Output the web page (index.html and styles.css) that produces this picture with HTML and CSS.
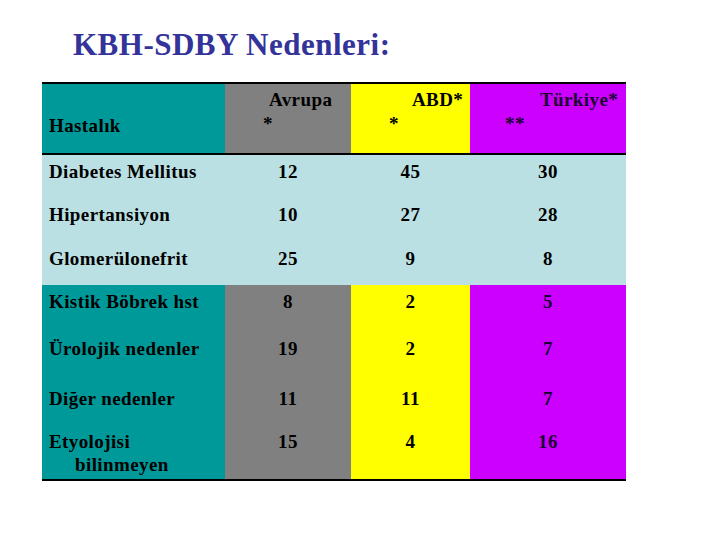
FILE: index.html
```html
<!DOCTYPE html>
<html lang="tr">
<head>
<meta charset="utf-8">
<title>KBH-SDBY Nedenleri</title>
<link rel="stylesheet" href="styles.css">
</head>
<body>
<h1 class="title">KBH-SDBY Nedenleri:</h1>
<table class="data">
  <colgroup>
    <col class="c1"><col class="c2"><col class="c3"><col class="c4">
  </colgroup>
  <thead>
    <tr class="head">
      <th class="teal h-name">Hastalık</th>
      <th class="gray h-col"><span class="l1 avr">Avrupa</span><span class="l2 avr2">*</span></th>
      <th class="yellow h-col"><span class="l1 abd">ABD*</span><span class="l2 abd2">*</span></th>
      <th class="magenta h-col"><span class="l1 tr">Türkiye*</span><span class="l2 tr2">**</span></th>
    </tr>
  </thead>
  <tbody>
    <tr class="light r44">
      <td class="name">Diabetes Mellitus</td><td class="num">12</td><td class="num">45</td><td class="num">30</td>
    </tr>
    <tr class="light r44">
      <td class="name">Hipertansiyon</td><td class="num">10</td><td class="num">27</td><td class="num">28</td>
    </tr>
    <tr class="light r43">
      <td class="name">Glomerülonefrit</td><td class="num">25</td><td class="num">9</td><td class="num">8</td>
    </tr>
    <tr class="color r47">
      <td class="name teal">Kistik Böbrek hst</td><td class="num gray">8</td><td class="num yellow">2</td><td class="num magenta">5</td>
    </tr>
    <tr class="color r50">
      <td class="name teal">Ürolojik nedenler</td><td class="num gray">19</td><td class="num yellow">2</td><td class="num magenta">7</td>
    </tr>
    <tr class="color r43">
      <td class="name teal">Diğer nedenler</td><td class="num gray">11</td><td class="num yellow">11</td><td class="num magenta">7</td>
    </tr>
    <tr class="color r55">
      <td class="name teal">Etyolojisi<span class="indent">bilinmeyen</span></td><td class="num gray">15</td><td class="num yellow">4</td><td class="num magenta">16</td>
    </tr>
  </tbody>
</table>
</body>
</html>
```
FILE: styles.css
```css
html, body {
  margin: 0;
  padding: 0;
  background: #ffffff;
}
body {
  font-family: "Liberation Serif", "Times New Roman", serif;
  color: #000000;
}
.title {
  margin: 0;
  padding: 30px 0 0 73px;
  height: 30px;
  font-size: 31px;
  line-height: 30px;
  letter-spacing: 0.5px;
  font-weight: bold;
  color: #333399;
}
.data {
  margin: 22px 0 0 42px;
  border-collapse: collapse;
  table-layout: fixed;
  width: 584px;
  border-top: 2px solid #000;
  border-bottom: 2px solid #000;
  font-size: 19px;
  letter-spacing: 0.4px;
  font-weight: bold;
}
.c1 { width: 183px; }
.c2 { width: 126px; }
.c3 { width: 119px; }
.c4 { width: 156px; }
.data th, .data td {
  padding: 0;
  vertical-align: top;
  text-align: left;
  font-weight: bold;
}
.head {
  height: 71px;
  border-bottom: 2px solid #000;
}
.head th {
  line-height: 24px;
}
.h-name {
  padding: 30px 0 0 7px !important;
}
.h-col {
  padding-top: 4px !important;
}
.l1, .l2 {
  display: block;
}
.avr { padding-left: 44px; }
.avr2 { padding-left: 38px; }
.abd { padding-left: 61px; }
.abd2 { padding-left: 38px; }
.tr { padding-left: 70px; }
.tr2 { padding-left: 35px; }

.teal { background: #009999; }
.gray { background: #808080; }
.yellow { background: #ffff00; }
.magenta { background: #cc00ff; color: #1a0033; }
.light td { background: #bbe0e3; }

.data td {
  line-height: 20px;
  padding-top: 7px;
}
.data td.name {
  padding-left: 7px;
}
.data td.num {
  text-align: center;
}
.indent {
  display: block;
  padding-left: 26px;
  line-height: 25px;
}
.r43 { height: 43px; }
.r44 { height: 44px; }
.r47 { height: 47px; }
.r50 { height: 50px; }
.r55 { height: 55px; }
```
